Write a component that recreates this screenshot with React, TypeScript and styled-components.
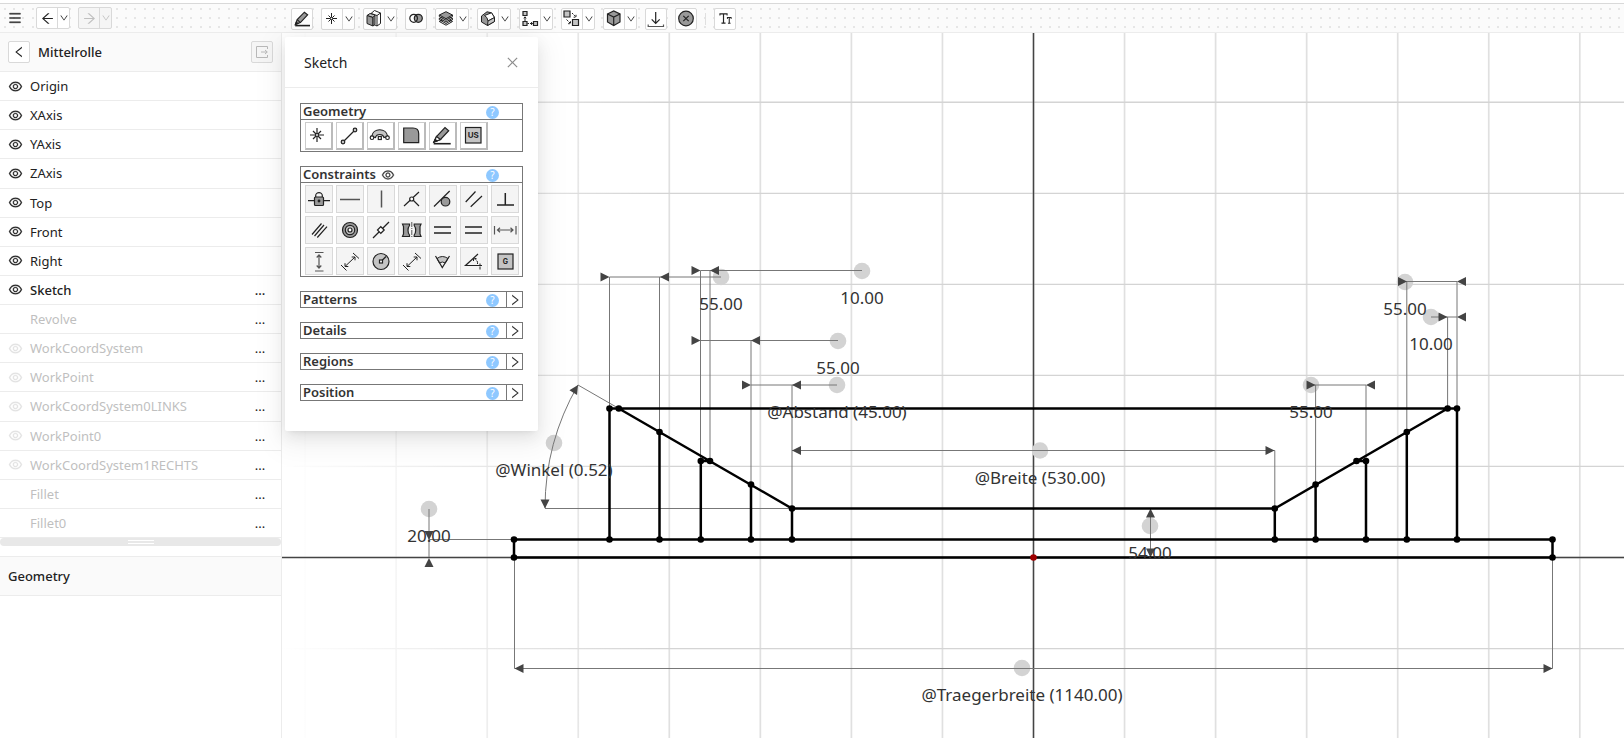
import React from 'react';
import styled, { createGlobalStyle, css } from 'styled-components';
import {
  AiOutlineArrowLeft,
  AiOutlineArrowRight,
  AiOutlineClose,
  AiOutlineDown,
  AiOutlineEye,
  AiOutlineFontSize,
  AiOutlineLeft,
  AiOutlineMenu,
  AiOutlineRight,
} from 'react-icons/ai';

const GlobalStyle = createGlobalStyle`
  *, *::before, *::after { box-sizing: border-box; }
  body { margin: 0; background: #fff; }
  button { font: inherit; color: inherit; margin: 0; padding: 0; cursor: pointer; }
  svg { display: block; flex: none; }
`;

const dot = (x: number, y: number) => `%3Crect x='${x}' y='${y}' width='2' height='2'/%3E`;
const dotTile = [4, 13, 22]
  .flatMap((x) => [4, 13, 22].map((y) => dot(x, y)))
  .join('');

/* ---------- layout ---------- */

const Page = styled.div`
  display: flex;
  flex-direction: column;
  height: 100vh;
  min-height: 620px;
  overflow: hidden;
  font-family: 'Noto Sans', 'Open Sans', sans-serif;
  font-size: 13px;
  line-height: 20px;
  color: #222;
`;

const Toolbar = styled.header`
  display: flex;
  flex: none;
  align-items: center;
  height: 30px;
  margin-top: 3px;
  border-top: 1px solid #d9d9d9;
  border-bottom: 1px solid #ececec;
  background: #fbfbfb url("data:image/svg+xml,%3Csvg xmlns='http://www.w3.org/2000/svg' width='28' height='28' fill='%23e6e6e6'%3E${dotTile}%3C/svg%3E");
`;

const HistoryTools = styled.div`
  display: flex;
  align-items: center;
  gap: 8px;
  width: 291px;
  padding-left: 8px;
`;

const ModelTools = styled.div`
  display: flex;
  align-items: center;
  gap: 8px;
  padding-top: 1px;
`;

const ToolDivider = styled.span`
  width: 1px;
  height: 12px;
  background: #e0e0e0;
`;

const MenuButton = styled.button`
  display: grid;
  place-items: center;
  width: 12px;
  margin-right: 8px;
  border: 0;
  background: none;
  color: #222;

  svg { stroke: currentColor; stroke-width: 30px; }
`;

const ToolGroup = styled.div<{ $off?: boolean }>`
  display: flex;
  height: 22px;
  border: 1px solid #d9d9d9;
  border-radius: 2px;
  background: ${(p) => (p.$off ? '#f5f5f5' : '#fff')};
  color: ${(p) => (p.$off ? '#bfbfbf' : '#222')};
`;

const ToolButton = styled.button`
  display: grid;
  place-items: center;
  width: 20px;
  border: 0;
  background: none;
`;

const ToolMenu = styled.button`
  display: grid;
  place-items: center;
  width: 12px;
  border: 0;
  border-left: 1px solid #d9d9d9;
  background: none;
`;

const Workspace = styled.div`
  display: flex;
  flex: 1;
  min-height: 0;
`;

const Sidebar = styled.aside`
  flex: none;
  width: 282px;
  border-right: 1px solid #ececec;
  background: #fff;
`;

const SidebarHead = styled.div`
  display: flex;
  align-items: center;
  height: 39px;
  padding: 0 8px;
  border-bottom: 1px solid #ececec;
  background: #fafafa;
`;

const PartName = styled.h1`
  flex: 1;
  margin: 0 0 0 8px;
  font-size: 13px;
  font-weight: 500;
`;

const SquareButton = styled.button`
  display: grid;
  place-items: center;
  width: 22px;
  height: 22px;
  border: 1px solid #d9d9d9;
  border-radius: 2px;
  background: #fff;

  &:disabled {
    background: #f5f5f5;
    color: #b8b8b8;
  }
`;

const Tree = styled.ul`
  display: grid;
  grid-auto-rows: 1fr;
  height: 466px;
  margin: 0;
  padding: 0;
  list-style: none;
`;

const TreeRow = styled.li<{ $dim?: boolean; $active?: boolean }>`
  display: grid;
  grid-template-columns: 15px 1fr 24px;
  align-items: center;
  column-gap: 7px;
  padding: 0 9px 0 8px;
  border-bottom: 1px solid #ececec;
  color: ${(p) => (p.$dim ? '#bfbfbf' : '#222')};
  font-weight: ${(p) => (p.$active ? 500 : 400)};
`;

const EyeButton = styled.button<{ $dim?: boolean }>`
  display: grid;
  place-items: center;
  border: 0;
  background: none;
  opacity: ${(p) => (p.$dim ? 0.45 : 1)};

  svg { stroke: currentColor; stroke-width: 20px; }
`;

const TreeLabel = styled.span`
  grid-column: 2;
`;

const MoreButton = styled.button`
  border: 0;
  background: none;
  color: #222;
`;

const Splitter = styled.div`
  display: grid;
  place-items: center;
  height: 8px;
  margin-bottom: 10px;
  border-radius: 4px;
  background: #e8e8e8;

  &::before {
    content: '';
    width: 26px;
    height: 4px;
    border: solid #fff;
    border-width: 1px 0;
  }
`;

const SectionHead = styled.h2`
  margin: 0;
  padding: 9px 8px;
  border: solid #ececec;
  border-width: 1px 0;
  background: #fafafa;
  font-size: 13px;
  font-weight: 500;
`;

const Viewport = styled.main`
  position: relative;
  flex: 1;
  min-width: 0;
`;

const Drawing = styled.svg`
  width: 100%;
  height: 100%;
  font-size: 17px;
`;

/* ---------- sketch window ---------- */

const SketchWindow = styled.section`
  position: absolute;
  top: 4px;
  left: 3px;
  width: 253px;
  border-radius: 2px;
  background: #fff;
  box-shadow: 0 3px 6px -4px rgba(0, 0, 0, 0.12), 0 6px 16px rgba(0, 0, 0, 0.08),
    0 9px 28px 8px rgba(0, 0, 0, 0.05);
`;

const WindowHead = styled.header`
  display: flex;
  align-items: center;
  justify-content: space-between;
  height: 51px;
  padding: 1px 18px 0 19px;
  border-bottom: 1px solid #ececec;
`;

const WindowTitle = styled.h2`
  margin: 0;
  font-size: 14px;
  font-weight: 400;
`;

const CloseButton = styled.button`
  display: grid;
  place-items: center;
  border: 0;
  background: none;
  color: #8c8c8c;
`;

const WindowBody = styled.div`
  display: grid;
  gap: 14px;
  padding: 15px 16px 30px 15px;
`;

const Group = styled.div`
  border: 1px solid #777;
`;

const GroupHead = styled.div`
  display: flex;
  align-items: center;
  height: 15px;
  padding-left: 2px;
  color: #333;
`;

const GroupTitle = styled.h3`
  display: flex;
  align-items: center;
  gap: 5px;
  flex: 1;
  margin: 0;
  font-size: 13px;
  font-weight: 600;
  line-height: 15px;
`;

const HelpButton = styled.button`
  width: 13px;
  height: 13px;
  margin: 2px 7px 0 0;
  border: 0;
  border-radius: 50%;
  background: #8ec8ff;
  color: #fff;
  font-size: 10px;
  line-height: 13px;
`;

const expandStyle = css`
  display: grid;
  place-items: center;
  width: 16px;
  height: 15px;
  border: 0;
`;

const ExpandButton = styled.button`
  ${expandStyle}
  border-left: 1px solid #777;
  background: none;
`;

const ExpandGap = styled.span`
  ${expandStyle}
`;

const IconGrid = styled.div`
  display: grid;
  grid-template-columns: repeat(7, 28px);
  gap: 3px;
  padding: 2px 3px 1px 4px;
  border-top: 1px solid #777;
`;

const GridButton = styled.button<{ $raised?: boolean }>`
  display: grid;
  place-items: center;
  width: 28px;
  height: 28px;
  border: 1px solid #d9d9d9;
  border-color: ${(p) => (p.$raised ? '#ccc #bbb #bbb #ccc' : '#d9d9d9')};
  border-width: ${(p) => (p.$raised ? '1px 2px 2px 1px' : '1px')};
  background: ${(p) => (p.$raised ? '#fff' : '#f4f4f4')};
`;

const Glyph = styled.svg`
  fill: none;
  stroke: #222;
  stroke-width: 1.2px;
  font-family: Inter, 'Noto Sans', sans-serif;
  font-weight: 700;

  .g { fill: #999; }
  .l { fill: #c4c4c4; }
  .w { fill: #fff; }
  .k { fill: #222; }
  .t { fill: #222; stroke: none; text-anchor: middle; }
  .s { stroke: #555; }
  .thin { stroke-width: 1px; }
`;

const ExitGlyph = styled.svg`
  fill: none;
  stroke: currentColor;
`;

/* ---------- glyphs ---------- */

const tools: Record<string, React.ReactNode> = {
  Sketch: (
    <>
      <path className="g" d="M3.5 15.2 5.2 10.6 12.4 3.2 15.6 5.9 8.4 13.6Z" />
      <path d="M5.2 10.6 8.4 13.6" />
      <path d="M3.2 16.6H18" strokeWidth="1.600" />
      <path className="k" d="M3.5 15.5 4.3 13.2 5.9 14.6Z" />
    </>
  ),
  Point: (
    <g className="thin">
      <path d="M4 9.500H15M9.500 4V15M6.500 6.500 12.500 12.500M12.500 6.500 6.500 12.500" />
      <circle className="w" cx="9.500" cy="9.500" r="1.200" />
    </g>
  ),
  Solid: (
    <g className="thin">
      <path className="w" d="M7 4.500 10.500 1.500 16.500 4V14.500L13 17 7 14Z" />
      <path d="M7 4.500 13 6.500 16.500 4M13 6.500V17" />
      <path className="l" d="M3 6.500 6 4.500 11 6 9 8.500Z" />
      <path className="g" d="M3 6.500 9 8.500V17L3 14.500Z" />
      <path className="g" d="M9 8.500 11 6.500V15.500L9 17Z" />
    </g>
  ),
  Boolean: (
    <>
      <circle className="w" cx="7.800" cy="9.300" r="4" />
      <circle className="g" cx="12.300" cy="9.300" r="4" />
      <path d="M10 6.200A4 4 0 0 1 10 12.400" />
    </>
  ),
  Layers: (
    <g className="thin">
      <path className="w" d="M3.300 12.500 10 9.500 16.500 12.500 10 16.200Z" />
      <path className="l" d="M3.300 9.300 10 6.300 16.500 9.300 10 13Z" />
      <path className="g" d="M3.300 6 10 2.700 16.500 6 10 9.700Z" />
      <path d="M3.300 6V7.500L10 11.200 16.500 7.500V6M3.300 9.300V10.800L10 14.500 16.500 10.800V9.300" />
    </g>
  ),
  Chamfer: (
    <g className="thin">
      <path className="g" d="M3.500 7 9 2.800 13.500 3.800 16.500 8.500V12.500L9.500 16.500 3.500 13Z" />
      <path className="w" d="M6.500 6.500 13.500 3.800 16.500 8.500 10 12Q9.500 8 6.500 6.500Z" />
      <path className="l" d="M10 12 16.500 8.500V12.500L9.500 16.500Z" />
    </g>
  ),
  Pattern: (
    <>
      <path className="l" d="M3 2.500H7V6.500H3ZM3 12.500H7V16.500H3ZM13.500 12.500H17.500V16.500H13.500Z" />
      <path className="thin" d="M5 12V8M3.800 9.300 5 7.800 6.200 9.300M7.500 14.500H9M10 14.500H12.500M11 13.200 12.600 14.500 11 15.800" />
    </>
  ),
  Transform: (
    <>
      <path className="l" d="M2 2H8V8H2ZM10.500 10.500H16.500V16.500H10.500Z" />
      <path className="thin" d="M10 4 14 8M14 5.800V8.200H11.600M4.500 10.500 8.500 14.500M8.500 12.300V14.700H6.100" strokeDasharray="2 1" />
    </>
  ),
  Body: (
    <>
      <path className="g" d="M3.500 5 9.700 2 16 5V13L9.700 16.500 3.500 13Z" />
      <path d="M3.500 5 9.700 8 16 5M9.700 8V16.500" />
    </>
  ),
  Import: (
    <>
      <path d="M9.700 3V14M5.700 10.300 9.700 14.300 13.700 10.300" />
      <path className="s" d="M2.200 15.500V17.500H17.500V15.500" />
    </>
  ),
  Delete: (
    <>
      <circle className="g" cx="10" cy="9.500" r="7.300" />
      <path d="M7.300 6.800 12.700 12.200M12.700 6.800 7.300 12.200" />
    </>
  ),
};

const geometryGlyphs: [string, React.ReactNode][] = [
  ['Point', <g key="g"><path d="M5 13H19M12 6V20M8 9 16 17M16 9 8 17" /><circle className="w" cx="12" cy="13" r="1.500" /></g>],
  ['Line', <g key="g"><path d="M7 20 19 8" /><circle className="l" cx="7" cy="20" r="1.800" /><circle className="l" cx="19" cy="8" r="1.800" /></g>],
  ['Arc', <g key="g"><path className="l" d="M4.700 14.500C6 5.500 19.400 5.500 20.700 14.500L17 15.500C16 11.500 9.500 11.500 8.500 15.500Z" /><circle className="w" cx="5" cy="15.700" r="1.800" /><circle className="w" cx="20.500" cy="15.700" r="1.800" /><rect className="w" x="11.300" y="14.500" width="3" height="3" /></g>],
  ['Fillet', <path key="g" className="g" d="M5.700 6H15Q20.700 6 20.700 11.700V20.700H5.700Z" />],
  ['Trim', <g key="g"><path className="g" d="M5 20 7.500 14.500 16 5.500 19.700 8.700 11.500 17.500Z" /><path className="w" d="M5 20 7.500 14.500 11.500 17.500Z" /><path className="k" d="M5 20 6.200 17.500 8 18.800Z" /><path d="M4.700 21.700H21.700" strokeWidth="1.600" /></g>],
  ['Units', <g key="g"><rect className="l" x="5.500" y="5.500" width="15.500" height="15.500" /><text className="t" x="13.200" y="16" fontSize="8">US</text></g>],
];

const distance = (
  <path className="thin" d="M17 6 23 11.500M5 18 10.500 23.500M9 19.500 19 10M9 16.200V19.500H12.300M15.700 10H19V13.300" />
);
const equal = <path d="M5 11H22M5 17H22" strokeWidth="1.500" />;

const constraintGlyphs: [string, React.ReactNode][] = [
  ['Fixation', <g key="g"><path d="M3 15.700H25M10.700 12V10.500C10.700 6.700 17.300 6.700 17.300 10.500V12" /><rect className="g" x="9.500" y="12" width="9" height="8.500" rx="1" /><circle className="k" cx="14" cy="16" r="0.800" /></g>],
  ['Horizontal', <path key="g" className="s" d="M4 14.500H24" strokeWidth="1.500" />],
  ['Vertical', <path key="g" className="s" d="M14.500 5.500V22.500" strokeWidth="1.500" />],
  ['Coincident', <g key="g"><path d="M6 21 21 7M14 14 21 21" /><circle className="w" cx="13.700" cy="14" r="2" /></g>],
  ['Tangent', <g key="g"><circle className="g" cx="16.500" cy="16.700" r="4.300" /><path d="M5 21.500 20.700 6" /></g>],
  ['Parallel', <path key="g" d="M5.700 17 15.500 6.500M10.700 21.700 22 11" />],
  ['Perpendicular', <path key="g" d="M14.300 8V20M6 20H23" strokeWidth="1.500" />],
  ['Collinear', <path key="g" d="M7 18.500 16.500 7.500M9.500 20 19 9M12.300 21.500 22 10.700" />],
  ['Concentric', <g key="g"><circle className="g" cx="14" cy="14" r="7.500" /><circle className="l" cx="14" cy="14" r="4.700" /><circle className="w" cx="14" cy="14" r="2" /></g>],
  ['Midpoint', <g key="g"><path d="M6 22 22 6" /><path className="w" d="M10.500 14 13.800 10.700 17.200 14 13.800 17.300Z" /></g>],
  ['Symmetry', <g key="g"><path className="g" d="M4.500 8H11.500V9.500C9.500 12 9.500 16.500 11.500 19V20.500H4.500L5.500 18V10.500ZM23 8H16.200V9.500C18.200 12 18.200 16.500 16.200 19V20.500H23L22 18V10.500Z" /><path className="s thin" d="M13.800 6V22" strokeDasharray="5 1 1 1" /></g>],
  ['Equal length', <g key="g">{equal}</g>],
  ['Equal radius', <g key="g">{equal}</g>],
  ['Horizontal distance', <path key="g" className="s" d="M3.500 10V18.500M25 10V18.500M6.500 14H22M9 11.700 6.500 14 9 16.300M19.500 11.700 22 14 19.500 16.300" />],
  ['Vertical distance', <path key="g" className="s" d="M10 5.500H18.500M10 24H18.500M14 8V21M11.700 10.500 14 8 16.300 10.500M11.700 18.500 14 21 16.300 18.500" />],
  ['Distance', <g key="g">{distance}</g>],
  ['Radius', <g key="g"><circle className="l" cx="14" cy="14.500" r="8" /><path d="M14 14.500 19 9.500" /><rect className="w" x="12.500" y="13" width="3" height="3" /></g>],
  ['Diameter', <g key="g">{distance}</g>],
  ['Angle', <g key="g"><path className="l thin" d="M8 11.500Q13.300 7.500 19 11.500L16.300 16Q13.300 14 10.500 16Z" /><path d="M6.500 9 13.300 20.500 20.500 9" /></g>],
  ['Angle to axis', <g key="g"><path d="M18 7 5.500 18.500H22" /><path className="thin" d="M20 22.500V16.500M14 11.500Q18 13 17.500 17M13.500 14V11.500H16.500" strokeDasharray="3 1" /></g>],
  ['Global', <g key="g"><rect className="l" x="7" y="7" width="15" height="15" /><text className="t" x="14.500" y="17" fontSize="7">G</text></g>],
];

/* ---------- sketch drawing ---------- */

const INK = '#444';

type Dir = 'left' | 'right' | 'up' | 'down';
const turn: Record<Dir, number> = { right: 0, down: 90, left: 180, up: 270 };

const Arrow = ({ x, y, dir, angle }: { x: number; y: number; dir?: Dir; angle?: number }) => (
  <path
    d="M0 0-9-4.500V4.500Z"
    fill={INK}
    transform={`translate(${x} ${y}) rotate(${angle ?? turn[dir ?? 'right']})`}
  />
);

const BASE = 557.5;
const BEAM = 539.5;
const L = [609.5, 618.8, 659.5, 700.8, 710, 751, 792];
const R = [1457, 1447.6, 1406.8, 1366, 1356.5, 1315.6, 1274.8];

const outline = [
  `M514 ${BASE}V${BEAM}H1552.500V${BASE}Z`,
  `M${L[0]} ${BEAM}V408.500H${R[0]}V${BEAM}`,
  `M${L[1]} 408.500 ${L[6]} 508.500H${R[6]}L${R[1]} 408.500`,
  `M${L[2]} 432V${BEAM}M${L[3]} ${BEAM}V461H${L[4]}M${L[5]} 484.500V${BEAM}M${L[6]} 508.500V${BEAM}`,
  `M${R[2]} 432V${BEAM}M${R[3]} ${BEAM}V461H${R[4]}M${R[5]} 484.500V${BEAM}M${R[6]} 508.500V${BEAM}`,
].join('');

const nodes: [number, number][] = [
  [514, BASE], [514, BEAM], [1552.5, BASE], [1552.5, BEAM],
  ...[L, R].flatMap((s): [number, number][] => [
    [s[0], 408.5], [s[1], 408.5], [s[2], 432], [s[3], 461], [s[4], 461], [s[5], 484.5], [s[6], 508.5],
    [s[0], BEAM], [s[2], BEAM], [s[3], BEAM], [s[5], BEAM], [s[6], BEAM],
  ]),
];

const dimensions = [
  'M609.500 277H721M609.500 277V408M659.500 277V432',
  'M700.500 270.500H862M700.500 270.500V461M710 270.500V461',
  'M700.500 340.500H838M751 340.500V484',
  'M751 385H837M792 385V508',
  'M792 450.500H1274.800V508',
  'M1405 281.500H1457V408M1406.800 281.500V432',
  'M1431 317H1457M1447.600 317V408',
  'M1311 385H1366V461M1315.600 385V484',
  'M514.500 557V668.500H1552.500V557',
  'M429 509V557M429 539.500H514',
  'M1150.500 508V557',
  'M545 508.500H792M618 408 578 385M545 508A247 247 0 0 1 578 385',
].join('');

const arrows: [number, number, Dir][] = [
  [609.5, 277, 'right'], [660, 277, 'left'],
  [700.5, 270.5, 'right'], [710, 270.5, 'left'],
  [700.5, 340.5, 'right'], [751, 340.5, 'left'],
  [751, 385, 'right'], [792, 385, 'left'],
  [792, 450.5, 'left'], [1274.5, 450.5, 'right'],
  [1407, 281.5, 'right'], [1457, 281.5, 'left'],
  [1447.5, 317, 'right'], [1457, 317, 'left'],
  [1315.5, 385, 'right'], [1366, 385, 'left'],
  [514.5, 668.5, 'left'], [1552.5, 668.5, 'right'],
  [429, 540, 'down'], [429, 558, 'up'],
  [1150.5, 508.5, 'up'], [1150.5, 557.5, 'down'],
  [545, 508.5, 'down'],
];

const labels: [number, number, string][] = [
  [721, 277, '55.00'],
  [862, 271, '10.00'],
  [838, 341, '55.00'],
  [837, 385, '@Abstand (45.00)'],
  [1405, 282, '55.00'],
  [1431, 317, '10.00'],
  [1311, 385, '55.00'],
  [554, 443, '@Winkel (0.52)'],
  [429, 509, '20.00'],
  [1040, 450.5, '@Breite (530.00)'],
  [1150, 526, '54.00'],
  [1022, 668, '@Traegerbreite (1140.00)'],
];

const GRID = 91.05;
const columns = Array.from({ length: 15 }, (_, i) => 1033.5 + (i - 8) * GRID);
const lines = Array.from({ length: 8 }, (_, i) => BASE + (i - 6) * GRID);

const SketchDrawing = () => (
  <Drawing viewBox="282 33 1342 705" preserveAspectRatio="xMidYMid slice" aria-label="Sketch of Mittelrolle">
    <defs>
      <linearGradient id="fade">
        <stop offset="0" stopColor="#fff" />
        <stop offset="1" stopColor="#fff" stopOpacity="0" />
      </linearGradient>
    </defs>
    <g stroke="#e0e0e0">
      {columns.map((x) => <path key={x} d={`M${x} 33V738`} strokeWidth="1.700" />)}
      {lines.map((y) => <path key={y} d={`M282 ${y}H1624`} stroke="#d4d4d4" strokeWidth="1.300" />)}
    </g>
    <rect x="282" y="33" width="380" height="705" fill="url(#fade)" />
    <path d="M282 557.500H1624M1033.500 33V738" stroke={INK} strokeWidth="1.500" fill="none" />
    {labels.map(([x, y]) => <circle key={`${x}${y}`} cx={x} cy={y} r="8.300" fill="#d3d3d3" />)}
    <path d={dimensions} stroke="#777" strokeWidth="1" fill="none" />
    {arrows.map(([x, y, dir]) => <Arrow key={`${x}${y}${dir}`} x={x} y={y} dir={dir} />)}
    <Arrow x={578} y={385} angle={-58} />
    <path d={outline} stroke="#000" strokeWidth="2.500" fill="none" />
    {nodes.map(([x, y]) => <circle key={`${x}${y}`} cx={x} cy={y} r="3.300" />)}
    <circle cx="1033.500" cy={BASE} r="3.300" fill="#a00000" />
    <g fill="#333" textAnchor="middle">
      {labels.map(([x, y, text]) => <text key={`${x}${y}`} x={x} y={y + 33}>{text}</text>)}
    </g>
  </Drawing>
);

/* ---------- composed parts ---------- */

const Tool = ({ name, menu, children }: { name: string; menu?: boolean; children?: React.ReactNode }) => (
  <ToolGroup>
    <ToolButton aria-label={name}>
      {children ?? <Glyph width="20" height="20" viewBox="0 0 20 20">{tools[name]}</Glyph>}
    </ToolButton>
    {menu && <ToolMenu aria-label={`${name} menu`}><AiOutlineDown size={10} /></ToolMenu>}
  </ToolGroup>
);

const modelTools: [string, boolean][] = [
  ['Sketch', false], ['Point', true], ['Solid', true], ['Boolean', false], ['Layers', true],
  ['Chamfer', true], ['Pattern', true], ['Transform', true], ['Body', true], ['Import', false], ['Delete', false],
];

type Item = { name: string; eye?: boolean; dim?: boolean; more?: boolean; active?: boolean };
const treeItems: Item[] = [
  ...['Origin', 'XAxis', 'YAxis', 'ZAxis', 'Top', 'Front', 'Right'].map((name) => ({ name, eye: true })),
  { name: 'Sketch', eye: true, more: true, active: true },
  { name: 'Revolve', dim: true, more: true },
  ...['WorkCoordSystem', 'WorkPoint', 'WorkCoordSystem0LINKS', 'WorkPoint0', 'WorkCoordSystem1RECHTS'].map(
    (name) => ({ name, eye: true, dim: true, more: true }),
  ),
  { name: 'Fillet', dim: true, more: true },
  { name: 'Fillet0', dim: true, more: true },
];

const GlyphGrid = ({ items, raised }: { items: [string, React.ReactNode][]; raised?: boolean }) => (
  <IconGrid>
    {items.map(([name, glyph]) => (
      <GridButton key={name} aria-label={name} $raised={raised}>
        <Glyph width="26" height="26" viewBox="1 1 26 26">{glyph}</Glyph>
      </GridButton>
    ))}
  </IconGrid>
);

const Section = ({ title, eye, children }: { title: string; eye?: boolean; children?: React.ReactNode }) => (
  <Group>
    <GroupHead>
      <GroupTitle>
        {title}
        {eye && <EyeButton aria-label="Show constraints"><AiOutlineEye size={14} /></EyeButton>}
      </GroupTitle>
      <HelpButton aria-label={`Help on ${title}`}>?</HelpButton>
      {children ? <ExpandGap /> : <ExpandButton aria-label={`Expand ${title}`}><AiOutlineRight size={14} /></ExpandButton>}
    </GroupHead>
    {children}
  </Group>
);

export default function App() {
  return (
    <Page>
      <GlobalStyle />
      <Toolbar>
        <HistoryTools>
          <MenuButton aria-label="Menu"><AiOutlineMenu size={14} /></MenuButton>
          <ToolGroup>
            <ToolButton aria-label="Undo"><AiOutlineArrowLeft size={15} /></ToolButton>
            <ToolMenu aria-label="Undo history"><AiOutlineDown size={10} /></ToolMenu>
          </ToolGroup>
          <ToolGroup $off>
            <ToolButton aria-label="Redo" disabled><AiOutlineArrowRight size={15} /></ToolButton>
            <ToolMenu aria-label="Redo history" disabled><AiOutlineDown size={10} /></ToolMenu>
          </ToolGroup>
        </HistoryTools>
        <ModelTools>
          {modelTools.map(([name, menu]) => <Tool key={name} name={name} menu={menu} />)}
          <ToolDivider />
          <Tool name="Text"><AiOutlineFontSize size={15} /></Tool>
        </ModelTools>
      </Toolbar>
      <Workspace>
        <Sidebar>
          <SidebarHead>
            <SquareButton aria-label="Back"><AiOutlineLeft size={14} /></SquareButton>
            <PartName>Mittelrolle</PartName>
            <SquareButton aria-label="Exit" disabled>
              <ExitGlyph width="14" height="14" viewBox="0 0 14 14">
                <path d="M12.500 4V1.500H1.500V12.500H12.500V10M6 7H12M10 5 12.300 7 10 9" />
              </ExitGlyph>
            </SquareButton>
          </SidebarHead>
          <Tree>
            {treeItems.map((item) => (
              <TreeRow key={item.name} $dim={item.dim} $active={item.active}>
                {item.eye && (
                  <EyeButton aria-label={`Show ${item.name}`} $dim={item.dim}><AiOutlineEye size={15} /></EyeButton>
                )}
                <TreeLabel>{item.name}</TreeLabel>
                {item.more && <MoreButton aria-label={`More for ${item.name}`}>...</MoreButton>}
              </TreeRow>
            ))}
          </Tree>
          <Splitter />
          <SectionHead>Geometry</SectionHead>
        </Sidebar>
        <Viewport>
          <SketchDrawing />
          <SketchWindow>
            <WindowHead>
              <WindowTitle>Sketch</WindowTitle>
              <CloseButton aria-label="Close"><AiOutlineClose size={15} /></CloseButton>
            </WindowHead>
            <WindowBody>
              <Section title="Geometry"><GlyphGrid items={geometryGlyphs} raised /></Section>
              <Section title="Constraints" eye><GlyphGrid items={constraintGlyphs} /></Section>
              <Section title="Patterns" />
              <Section title="Details" />
              <Section title="Regions" />
              <Section title="Position" />
            </WindowBody>
          </SketchWindow>
        </Viewport>
      </Workspace>
    </Page>
  );
}
